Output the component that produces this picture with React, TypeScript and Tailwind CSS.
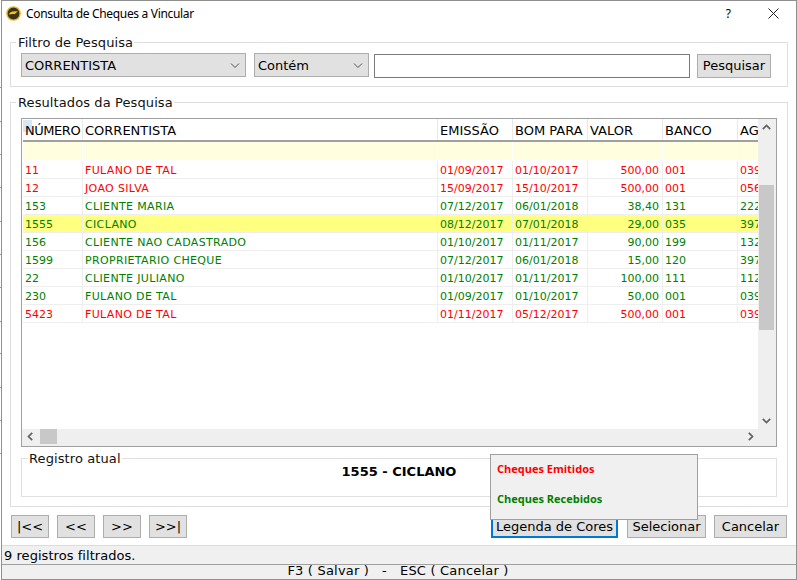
import React from "react";

type Row = { n: string; name: string; e: string; b: string; v: string; bk: string; ag: string; red?: boolean; sel?: boolean };
const rows: Row[] = [
  { n: "11", name: "FULANO DE TAL", e: "01/09/2017", b: "01/10/2017", v: "500,00", bk: "001", ag: "039", red: true },
  { n: "12", name: "JOAO SILVA", e: "15/09/2017", b: "15/10/2017", v: "500,00", bk: "001", ag: "056", red: true },
  { n: "153", name: "CLIENTE MARIA", e: "07/12/2017", b: "06/01/2018", v: "38,40", bk: "131", ag: "222" },
  { n: "1555", name: "CICLANO", e: "08/12/2017", b: "07/01/2018", v: "29,00", bk: "035", ag: "397", sel: true },
  { n: "156", name: "CLIENTE NAO CADASTRADO", e: "01/10/2017", b: "01/11/2017", v: "90,00", bk: "199", ag: "132" },
  { n: "1599", name: "PROPRIETARIO CHEQUE", e: "07/12/2017", b: "06/01/2018", v: "15,00", bk: "120", ag: "397" },
  { n: "22", name: "CLIENTE JULIANO", e: "01/10/2017", b: "01/11/2017", v: "100,00", bk: "111", ag: "112" },
  { n: "230", name: "FULANO DE TAL", e: "01/09/2017", b: "01/10/2017", v: "50,00", bk: "001", ag: "039" },
  { n: "5423", name: "FULANO DE TAL", e: "01/11/2017", b: "05/12/2017", v: "500,00", bk: "001", ag: "039", red: true },
];

const cols = "grid grid-cols-[60px_355px_75px_75px_75px_75px_21px]";
const font = "font-['DejaVu_Sans',sans-serif]";
const btn = "h-[23px] bg-[#e1e1e1] text-[13px] text-black flex items-center justify-center";
const ticks = [87, 121, 154, 187, 221, 254, 287, 321, 353, 387, 420, 453];

function Chevron({ d, cls }: { d: string; cls: string }) {
  return (
    <svg width="9" height="9" viewBox="0 0 9 9" className={cls} fill="none" stroke="#606060" strokeWidth="1.7">
      <path d={d} />
    </svg>
  );
}

function Select({ label, w }: { label: string; w: string }) {
  return (
    <div className={`${w} h-[24px] bg-[#e1e1e1] border border-[#adadad] flex items-center justify-between pl-[3px] pr-[5px] pt-[2px] text-[13px]`}>
      <span>{label}</span>
      <svg width="10" height="6" viewBox="0 0 10 6" fill="none" stroke="#505050" strokeWidth="1">
        <path d="M1 .5 5 4.5 9 .5" />
      </svg>
    </div>
  );
}

export default function App() {
  return (
    <div className={`${font} w-[797px] h-[580px] bg-white pl-px overflow-hidden text-black relative`}>
      {ticks.map((y) => (
        <div key={y} className="absolute left-0 w-px h-px bg-[#9a9a9a]" style={{ top: y }} />
      ))}
      <div className="w-[796px] h-[580px] border border-[#8f8f8f] flex flex-col bg-white">
        {/* Title bar */}
        <div className="h-[29px] shrink-0 flex items-center pl-[4px] pr-[17px] pb-[4px]">
          <svg width="15" height="15" viewBox="0 0 15 15" className="shrink-0">
            <circle cx="7.5" cy="7.5" r="6.6" fill="#3a3320" stroke="#e8b818" strokeWidth="1.4" />
            <path d="M2.6 8.6C4 5.6 7 4.6 12 5.6 10.5 6.6 9.6 7 9 8.2 7 7.6 5 8 2.6 8.6Z" fill="#f2c41c" />
          </svg>
          <span className="ml-[5px] text-[12px] font-['Noto_Sans',sans-serif] tracking-[-0.33px]">Consulta de Cheques a Vincular</span>
          <span className="ml-auto text-[12px] font-['Noto_Sans',sans-serif] mr-[37px]">?</span>
          <svg width="11" height="11" viewBox="0 0 11 11" stroke="#222" strokeWidth="1" fill="none">
            <path d="M.5.5 10.5 10.5M10.5.5.5 10.5" />
          </svg>
        </div>

        {/* Filter group */}
        <div className="mt-[6px] ml-[8px] w-[778px] h-[51px] shrink-0 relative">
          <div className="absolute left-0 right-0 top-[6px] bottom-0 border border-[#dedede]" />
          <span className="absolute left-[6px] top-[-1px] bg-white pr-[1px] pl-[2px] text-[13px] tracking-[0.1px] leading-[15px] text-[#111]">Filtro de Pesquisa</span>
          <div className="absolute left-[11px] top-[17px] flex items-start">
            <Select label="CORRENTISTA" w="w-[225px]" />
            <Select label="Contém" w="w-[115px] ml-[8px]" />
            <div className="w-[316px] h-[24px] mt-px ml-[5px] border border-[#7a7a7a] bg-white" />
            <div className={`${btn} border border-[#adadad] w-[74px] mt-px ml-[7px] h-[24px]`}>Pesquisar</div>
          </div>
        </div>

        {/* Results group */}
        <div className="mt-[8px] ml-[8px] w-[778px] h-[412px] shrink-0 relative">
          <div className="absolute left-0 right-0 top-[7px] bottom-0 border border-[#dedede]" />
          <span className="absolute left-[6px] top-0 bg-white pl-[2px] pr-[1px] text-[13px] tracking-[0.1px] leading-[15px] text-[#111]">Resultados da Pesquisa</span>

          <div className="absolute left-[11px] top-[23px] w-[756px] h-[329px] border border-[#a0a0a0] flex flex-col bg-white">
            <div className="flex flex-1 min-h-0 pl-px">
              <div className="w-[736px] overflow-hidden relative">
                <div className="absolute left-0 top-px w-[9px] h-[12px] bg-[#d5e6f5]" />
                <div className={`${cols} grid-rows-[21px] h-[23px] border-b-2 border-[#a0a0a0] text-[13px] leading-[20px] relative`}>
                  {["NÚMERO", "CORRENTISTA", "EMISSÃO", "BOM PARA", "VALOR", "BANCO", "AG"].map((h, i) => (
                    <div key={h} className={`pl-[2px] pt-[2px] border-r border-[#e8e8e8] last:border-0 whitespace-nowrap overflow-hidden ${i === 0 ? "tracking-[-0.45px]" : ""}`}>{h}</div>
                  ))}
                </div>
                <div className={`${cols} h-[18px] mb-px bg-[#ffffe0]`}>
                  {[0, 1, 2, 3, 4, 5, 6].map((i) => (
                    <div key={i} className="border-r border-white last:border-0" />
                  ))}
                </div>
                {rows.map((r) => (
                  <div
                    key={r.n}
                    className={`${cols} grid-rows-[17px] h-[18px] text-[11px] leading-[19px] border-b border-[#eeeeee] ${r.sel ? "bg-[#ffff80]" : ""} ${r.red ? "text-[#ff0000]" : "text-[#008000]"}`}
                  >
                    {[r.n, r.name, r.e, r.b, r.v, r.bk, r.ag].map((c, i) => (
                      <div
                        key={i}
                        className={`${i === 4 ? "text-right pr-[3px]" : "pl-[2px]"} ${i === 1 ? "tracking-[0.35px]" : ""} border-r border-[#eeeeee] last:border-0 whitespace-nowrap overflow-hidden`}
                      >
                        {c}
                      </div>
                    ))}
                  </div>
                ))}
              </div>
              <div className="w-[16px] bg-[#efefef] flex flex-col items-center">
                <Chevron d="M.8 6.2 4.5 2.5 8.2 6.2" cls="mt-[4px] shrink-0" />
                <div className="w-[15px] h-[145px] mt-[53px] bg-[#c8c8c8] shrink-0" />
                <Chevron d="M.8 2.8 4.5 6.5 8.2 2.8" cls="mt-auto mb-[4px] shrink-0" />
              </div>
              <div className="w-[2px] bg-[#efefef]" />
            </div>
            <div className="h-[17px] shrink-0 bg-[#efefef] flex items-start pl-[4px] pr-[21px]">
              <Chevron d="M6.2.8 2.5 4.5 6.2 8.2" cls="shrink-0 mt-[3px]" />
              <div className="w-[17px] h-[15px] bg-[#c8c8c8] ml-[5px]" />
              <Chevron d="M2.8.8 6.5 4.5 2.8 8.2" cls="ml-auto shrink-0 mt-[3px]" />
            </div>
          </div>

          <div className="absolute left-[11px] top-[363px] w-[756px] h-[39px] border border-[#e0e0e0] flex items-center justify-center pb-[11px]">
            <span className="absolute left-[6px] top-[-8px] bg-white pr-[1px] pl-[1px] text-[13px] tracking-[0.1px] leading-[15px] text-[#111]">Registro atual</span>
            <span className="font-bold text-[13px]">1555 - CICLANO</span>
          </div>
        </div>

        {/* Buttons */}
        <div className="mt-[8px] h-[23px] shrink-0 flex pl-[9px] pr-[9px]">
          <div className={`${btn} border border-[#adadad] w-[38px]`}>|&lt;&lt;</div>
          <div className={`${btn} border border-[#adadad] w-[38px] ml-[8px]`}>&lt;&lt;</div>
          <div className={`${btn} border border-[#adadad] w-[38px] ml-[8px]`}>&gt;&gt;</div>
          <div className={`${btn} border border-[#adadad] w-[38px] ml-[8px]`}>&gt;&gt;|</div>
          <div className={`${btn} w-[127px] ml-auto border-2 border-[#0078d7]`}>Legenda de Cores</div>
          <div className={`${btn} border border-[#adadad] w-[79px] ml-[9px]`}>Selecionar</div>
          <div className={`${btn} border border-[#adadad] w-[73px] ml-[8px]`}>Cancelar</div>
        </div>

        {/* Status */}
        <div className="mt-[7px] h-[20px] shrink-0 bg-[#f0f0f0] border-t border-[#dcdcdc] border-b border-b-[#a0a0a0] pl-[2px] text-[13px] tracking-[0.05px] leading-[19px]">9 registros filtrados.</div>
        <div className="flex-1 min-h-0 bg-[#f0f0f0] text-[13px] tracking-[0.2px] leading-[11px] text-center overflow-hidden whitespace-pre pr-[2px]">F3 ( Salvar )   -   ESC ( Cancelar )</div>
      </div>

      {/* Legend popup */}
      <div className="absolute left-[490px] top-[454px] w-[208px] h-[66px] bg-[#f0f0f0] border border-[#a0a0a0] font-['Open_Sans',sans-serif] font-bold text-[11px] pl-[6px] pt-[6px] leading-[16px]">
        <div className="text-[#ff0000]">Cheques Emitidos</div>
        <div className="text-[#008000] mt-[14px]">Cheques Recebidos</div>
      </div>
    </div>
  );
}
